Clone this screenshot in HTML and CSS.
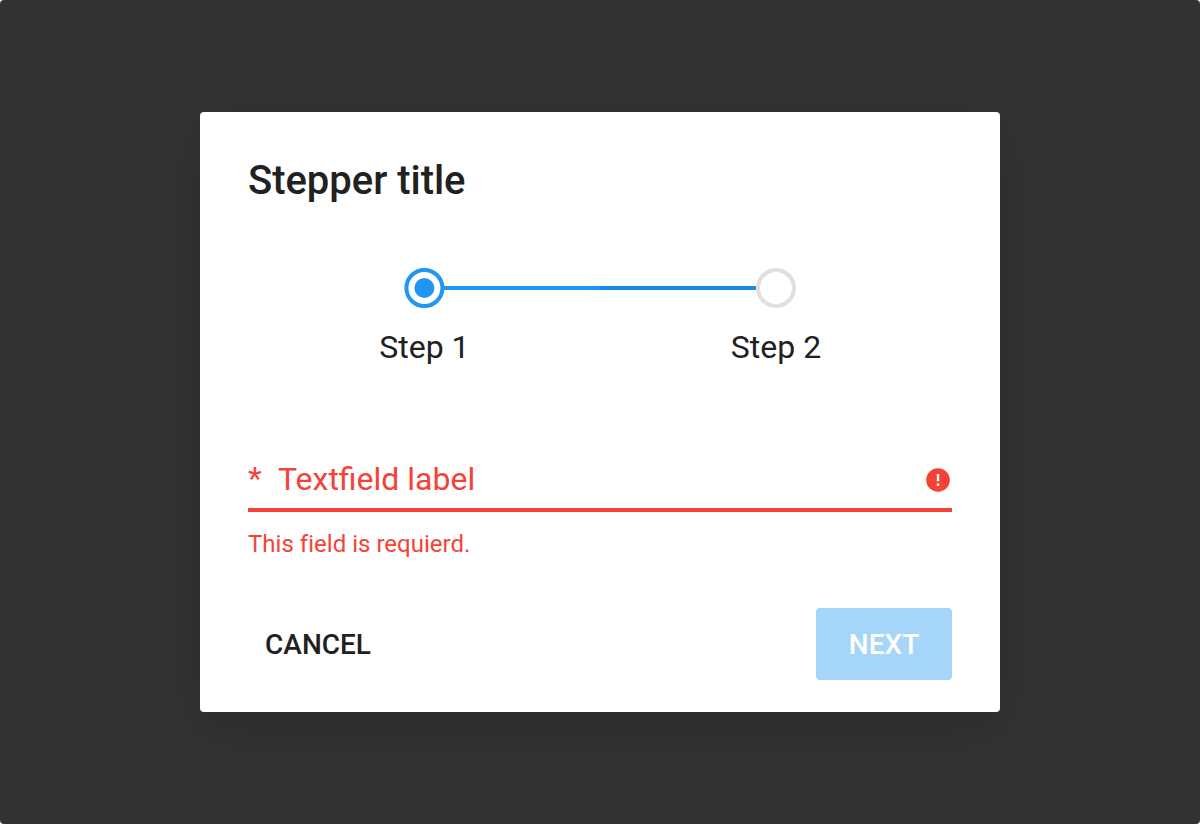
FILE: index.html
```html
<!DOCTYPE html>
<html lang="en">
<head>
<meta charset="utf-8">
<title>Stepper</title>
<link rel="stylesheet" href="styles.css">
</head>
<body>
<main class="backdrop">
  <section class="dialog">
    <h1 class="title">Stepper title</h1>
    <div class="stepper">
      <div class="step step-current">
        <span class="dot dot-active"></span>
        <span class="step-label">Step 1</span>
      </div>
      <div class="line"><span class="line-start"></span><span class="line-end"></span></div>
      <div class="step">
        <span class="dot"></span>
        <span class="step-label">Step 2</span>
      </div>
    </div>
    <div class="field">
      <span class="asterisk">*</span>
      <span class="field-label">Textfield label</span>
      <svg class="error-icon" viewBox="0 0 24 24"><circle cx="12" cy="12" r="11.8"/><path d="M10.8 6h2.4v7.2h-2.4zM10.8 15.6h2.4V18h-2.4z"/></svg>
    </div>
    <p class="helper">This field is requierd.</p>
    <div class="actions">
      <button class="button cancel">CANCEL</button>
      <button class="button next">NEXT</button>
    </div>
  </section>
</main>
</body>
</html>
```
FILE: styles.css
```css
* { box-sizing: border-box; }
body { margin: 0; background: #fff; font-family: Roboto, sans-serif; color: #212121; }
.backdrop { width: 1200px; height: 824px; border-radius: 4px; background: #333; display: flex; align-items: center; justify-content: center; overflow: hidden; }
.dialog { width: 800px; height: 600px; padding: 45px 48px 32px; border-radius: 4px; background: #fff; box-shadow: 0 16px 48px rgba(0,0,0,.17); display: flex; flex-direction: column; }
.title { margin: 0; font-size: 40px; line-height: 48px; font-weight: 500; letter-spacing: -.03px; }
.stepper { margin-top: 63px; height: 104px; display: flex; justify-content: center; }
.step { width: 40px; display: flex; flex-direction: column; align-items: center; }
.step-current { transform: translateX(.4px); }
.dot { width: 40px; height: 40px; flex: none; border: 4px solid #e0e0e0; border-radius: 50%; display: flex; align-items: center; justify-content: center; }
.dot-active { border-color: #2196f3; }
.dot-active::before { content: ""; width: 20px; height: 20px; border-radius: 50%; background: #2196f3; }
.step-label { margin-top: 20px; font-size: 32px; line-height: 38px; white-space: nowrap; }
.line { width: 312px; height: 4px; margin-top: 18px; display: flex; }
.line-start, .line-end { flex: 1; background: #2196f3; }
.line-end { background: #1e88e5; }
.field { margin-top: 84px; height: 56px; border-bottom: 4px solid #f44336; display: flex; align-items: flex-start; color: #f44336; font-size: 32px; line-height: 38px; padding-top: 4px; }
.asterisk { width: 30px; margin-top: -1px; }
.error-icon { width: 24px; height: 24px; margin: 8px 2px 0 auto; fill: #f44336; }
.error-icon path { fill: #fff; }
.helper { margin: 18px 0 0; font-size: 24px; line-height: 28px; letter-spacing: .02px; color: #f44336; }
.actions { margin-top: auto; display: flex; justify-content: space-between; }
.button { height: 72px; border: 0; border-radius: 4px; font: 500 28px/36px Roboto, sans-serif; padding: 2px 0 0; }
.cancel { width: 140px; background: none; color: #212121; }
.next { width: 136px; background: #a6d5fa; color: #fff; }
```
